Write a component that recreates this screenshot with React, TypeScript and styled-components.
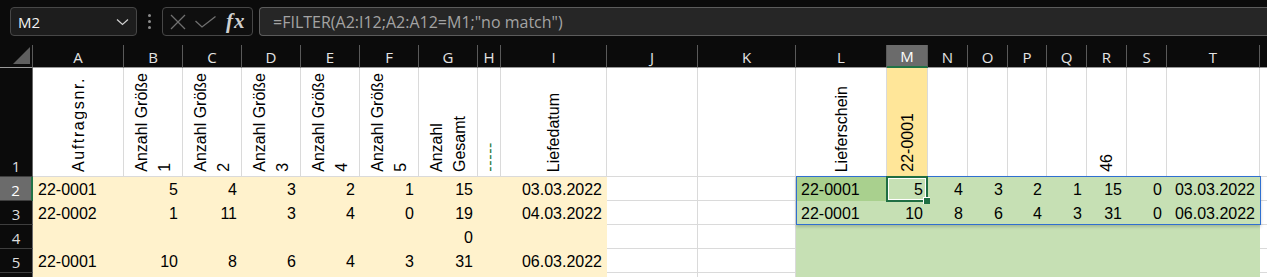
import React from "react";
import styled, { createGlobalStyle, css } from "styled-components";

const GlobalStyle = createGlobalStyle`
  html, body { margin: 0; padding: 0; background: #0b0b0b; overflow: hidden; }
  * { box-sizing: border-box; }
`;

const UI_FONT = `"Open Sans", "Noto Sans", sans-serif`;
const CELL_FONT = `"Liberation Sans", Arial, sans-serif`;

const Root = styled.div`
  width: 1267px;
  height: 277px;
  overflow: hidden;
  background: #0b0b0b;
  display: flex;
  flex-direction: column;
`;

const TopBar = styled.div`
  height: 45px;
  flex: none;
  display: flex;
  align-items: flex-start;
  padding: 7px 0 0 10px;
`;

const NameBox = styled.div`
  width: 127px;
  height: 29px;
  border: 1px solid #474747;
  border-radius: 4px;
  background: #1d1d1d;
  display: flex;
  align-items: center;
  justify-content: space-between;
  padding: 0 7px 0 7px;
  font-family: ${UI_FONT};
  font-size: 15px;
  color: #f2f2f2;
`;

const Dots = styled.div`
  width: 25px;
  height: 29px;
  display: flex;
  flex-direction: column;
  align-items: center;
  justify-content: center;
  gap: 3px;
  & > span {
    width: 3px;
    height: 3px;
    border-radius: 50%;
    background: #8c8c8c;
  }
`;

const FuncBox = styled.div`
  width: 91px;
  height: 29px;
  border: 1px solid #474747;
  border-radius: 4px;
  background: #0f0f0f;
  display: flex;
  align-items: center;
  padding: 0 0 0 7px;
  gap: 9px;
`;

const Fx = styled.span`
  font-family: "Liberation Serif", "DejaVu Serif", serif;
  font-style: italic;
  font-weight: bold;
  font-size: 21px;
  color: #d0d0d0;
  letter-spacing: 1px;
  margin-left: 1px;
  line-height: 1;
`;

const FormulaBox = styled.div`
  flex: 1;
  height: 29px;
  margin-left: 6px;
  border: 1px solid #5c5c5c;
  border-right: none;
  border-radius: 4px 0 0 4px;
  background: #262626;
  display: flex;
  align-items: center;
  padding-left: 13px;
  font-family: ${UI_FONT};
  font-size: 16px;
  color: #a3a3a3;
  white-space: nowrap;
`;

const COLS = [
  { k: "A", w: 91 }, { k: "B", w: 59 }, { k: "C", w: 59 }, { k: "D", w: 59 },
  { k: "E", w: 59 }, { k: "F", w: 59 }, { k: "G", w: 59 }, { k: "H", w: 23 },
  { k: "I", w: 106 }, { k: "J", w: 91 }, { k: "K", w: 98 }, { k: "L", w: 91 },
  { k: "M", w: 41 }, { k: "N", w: 40 }, { k: "O", w: 40 }, { k: "P", w: 39 },
  { k: "Q", w: 40 }, { k: "R", w: 40 }, { k: "S", w: 40 }, { k: "T", w: 93 },
  { k: "U", w: 80 },
];

const Sheet = styled.div`
  flex: 1;
  display: grid;
  grid-template-columns: 33px ${COLS.map((c) => `${c.w}px`).join(" ")};
  grid-template-rows: 23px 109px repeat(5, 24px);
  overflow: hidden;
  background: #ffffff;
`;

type Pos = { $r: number; $c: number };
const place = css<Pos>`
  grid-row: ${(p) => p.$r};
  grid-column: ${(p) => p.$c};
`;

const Corner = styled.div`
  grid-row: 1;
  grid-column: 1;
  background: #0b0b0b;
  border-bottom: 1px solid #9a9a9a;
  border-right: 1px solid #5a5a5a;
  display: flex;
  align-items: flex-end;
  justify-content: flex-end;
  padding: 0 2px 3px 0;
`;

const ColHead = styled.div<Pos & { $sel?: boolean }>`
  ${place};
  background: ${(p) => (p.$sel ? "#6b6b6b" : "#0b0b0b")};
  border-right: 1px solid #5a5a5a;
  border-bottom: ${(p) => (p.$sel ? "2px solid #217346" : "1px solid #9a9a9a")};
  color: ${(p) => (p.$sel ? "#ffffff" : "#e4e4e4")};
  font-family: ${UI_FONT};
  font-size: 15px;
  display: flex;
  align-items: center;
  justify-content: center;
  padding-top: 1px;
  overflow: hidden;
`;

const RowHead = styled.div<Pos & { $sel?: boolean }>`
  ${place};
  background: ${(p) => (p.$sel ? "#6b6b6b" : "#0b0b0b")};
  border-bottom: 1px solid #3e3e3e;
  border-right: ${(p) => (p.$sel ? "2px solid #217346" : "1px solid #6a6a6a")};
  color: ${(p) => (p.$sel ? "#ffffff" : "#dedede")};
  font-family: ${UI_FONT};
  font-size: 15px;
  line-height: 18px;
  display: flex;
  align-items: flex-end;
  justify-content: center;
  padding-bottom: 1px;
`;

type Fill = "none" | "yellow" | "green" | "greenDark" | "gold";
const FILLS: Record<Fill, string> = {
  none: "#ffffff",
  yellow: "#fff2cc",
  green: "#c6e0b4",
  greenDark: "#a9d08e",
  gold: "#ffe699",
};

const Cell = styled.div<Pos & { $fill: Fill; $align: "left" | "right" }>`
  ${place};
  background: ${(p) => FILLS[p.$fill]};
  ${(p) =>
    p.$fill === "none"
      ? css`
          border-right: 1px solid #dadada;
          border-bottom: 1px solid #dadada;
        `
      : css`
          border-right: 1px solid ${FILLS[p.$fill]};
          border-bottom: 1px solid ${FILLS[p.$fill]};
        `}
  font-family: ${CELL_FONT};
  font-size: 16px;
  line-height: 18px;
  color: #000;
  display: flex;
  align-items: flex-end;
  justify-content: ${(p) => (p.$align === "right" ? "flex-end" : "flex-start")};
  padding: 0 4px 1px 5px;
  white-space: nowrap;
`;

const RotCell = styled.div<Pos & { $fill: Fill }>`
  ${place};
  background: ${(p) => FILLS[p.$fill]};
  border-right: 1px solid #dadada;
  border-bottom: 1px solid #dadada;
  display: flex;
  align-items: flex-end;
  justify-content: center;
  padding-bottom: 4px;
  overflow: hidden;
`;

const VText = styled.div<{ $color?: string; $spacing?: number }>`
  writing-mode: vertical-rl;
  transform: rotate(180deg);
  font-family: ${CELL_FONT};
  font-size: 16px;
  line-height: 23px;
  white-space: nowrap;
  letter-spacing: ${(p) => p.$spacing ?? 0}px;
  color: ${(p) => p.$color ?? "#000"};
`;

const SpillFrame = styled.div`
  grid-column: 13 / 22;
  grid-row: 3 / 5;
  margin: -1px -1px 0 0;
  border: 1px solid #2f6fd0;
  box-shadow: 0 2px 3px rgba(0, 0, 0, 0.18);
  position: relative;
  z-index: 2;
  pointer-events: none;
`;

const ActiveFrame = styled.div`
  grid-column: 14 / 15;
  grid-row: 3 / 4;
  margin: -1px 0 -1px -1px;
  border: 2px solid #1f6e43;
  box-shadow: inset 0 0 0 1px #ffffff;
  position: relative;
  z-index: 3;
  pointer-events: none;
`;

const FillHandle = styled.div`
  position: absolute;
  right: -4px;
  bottom: -4px;
  width: 7px;
  height: 7px;
  background: #1f6e43;
  border-left: 1px solid #ffffff;
  border-top: 1px solid #ffffff;
`;

type V = string | number | null;
const rowData: Record<number, Partial<Record<string, V>>> = {
  2: { A: "22-0001", B: 5, C: 4, D: 3, E: 2, F: 1, G: 15, I: "03.03.2022", L: "22-0001", M: 5, N: 4, O: 3, P: 2, Q: 1, R: 15, S: 0, T: "03.03.2022" },
  3: { A: "22-0002", B: 1, C: 11, D: 3, E: 4, F: 0, G: 19, I: "04.03.2022", L: "22-0001", M: 10, N: 8, O: 6, P: 4, Q: 3, R: 31, S: 0, T: "06.03.2022" },
  4: { G: 0 },
  5: { A: "22-0001", B: 10, C: 8, D: 6, E: 4, F: 3, G: 31, I: "06.03.2022" },
  6: {},
};

const header: Partial<Record<string, { lines: string[]; fill?: Fill; color?: string; spacing?: number }>> = {
  A: { lines: ["Auftragsnr."], spacing: 1.6 },
  B: { lines: ["Anzahl Größe", "1"] },
  C: { lines: ["Anzahl Größe", "2"] },
  D: { lines: ["Anzahl Größe", "3"] },
  E: { lines: ["Anzahl Größe", "4"] },
  F: { lines: ["Anzahl Größe", "5"] },
  G: { lines: ["Anzahl", "Gesamt"] },
  H: { lines: ["-----"], color: "#2a7a3c", spacing: 0.6 },
  I: { lines: ["Liefedatum"] },
  L: { lines: ["Lieferschein"] },
  M: { lines: ["22-0001"], fill: "gold" },
  R: { lines: ["46"] },
};

const yellowCols = ["A", "B", "C", "D", "E", "F", "G", "H", "I"];
const greenCols = ["L", "M", "N", "O", "P", "Q", "R", "S", "T"];

function fillFor(col: string, row: number): Fill {
  if (yellowCols.includes(col)) return "yellow";
  if (greenCols.includes(col)) return col === "L" && row === 2 ? "greenDark" : "green";
  return "none";
}

const ChevronIcon = () => (
  <svg width="13" height="8" viewBox="0 0 13 8">
    <polyline points="1,1.5 6.5,6.5 12,1.5" fill="none" stroke="#d0d0d0" strokeWidth="1.2" />
  </svg>
);

const CancelIcon = () => (
  <svg width="16" height="16" viewBox="0 0 16 16">
    <line x1="1" y1="1" x2="15" y2="15" stroke="#707070" strokeWidth="1.3" />
    <line x1="15" y1="1" x2="1" y2="15" stroke="#707070" strokeWidth="1.3" />
  </svg>
);

const CheckIcon = () => (
  <svg width="21" height="12" viewBox="0 0 21 12">
    <polyline points="0.5,5 7,11 20.5,0.5" fill="none" stroke="#707070" strokeWidth="1.3" />
  </svg>
);

const CornerTriangle = () => (
  <svg width="17" height="17" viewBox="0 0 17 17">
    <polygon points="17,0 17,17 0,17" fill="#5f5f5f" />
  </svg>
);

export default function App() {
  const rows = [2, 3, 4, 5, 6];
  return (
    <Root>
      <GlobalStyle />
      <TopBar>
        <NameBox>
          <span>M2</span>
          <ChevronIcon />
        </NameBox>
        <Dots>
          <span />
          <span />
          <span />
        </Dots>
        <FuncBox>
          <CancelIcon />
          <CheckIcon />
          <Fx>fx</Fx>
        </FuncBox>
        <FormulaBox>=FILTER(A2:I12;A2:A12=M1;"no match")</FormulaBox>
      </TopBar>
      <Sheet>
        <Corner>
          <CornerTriangle />
        </Corner>
        {COLS.map((c, ci) => (
          <ColHead key={c.k} $r={1} $c={ci + 2} $sel={c.k === "M"}>
            {c.k === "U" ? "" : c.k}
          </ColHead>
        ))}

        <RowHead $r={2} $c={1}>1</RowHead>
        {COLS.map((c, ci) => {
          const h = header[c.k];
          return (
            <RotCell key={c.k} $r={2} $c={ci + 2} $fill={h?.fill ?? "none"}>
              {h && (
                <VText $color={h.color} $spacing={h.spacing}>
                  {h.lines.map((l, i) => (
                    <React.Fragment key={i}>
                      {i > 0 && <br />}
                      {l}
                    </React.Fragment>
                  ))}
                </VText>
              )}
            </RotCell>
          );
        })}

        {rows.map((r) => (
          <React.Fragment key={r}>
            <RowHead $r={r + 1} $c={1} $sel={r === 2}>
              {r < 6 ? r : ""}
            </RowHead>
            {COLS.map((c, ci) => {
              const v = rowData[r][c.k];
              const isText = typeof v === "string" && !/^\d\d\.\d\d\.\d{4}$/.test(v);
              return (
                <Cell
                  key={c.k}
                  $r={r + 1}
                  $c={ci + 2}
                  $fill={fillFor(c.k, r)}
                  $align={isText ? "left" : "right"}
                >
                  {v ?? ""}
                </Cell>
              );
            })}
          </React.Fragment>
        ))}

        <SpillFrame />
        <ActiveFrame>
          <FillHandle />
        </ActiveFrame>
      </Sheet>
    </Root>
  );
}
